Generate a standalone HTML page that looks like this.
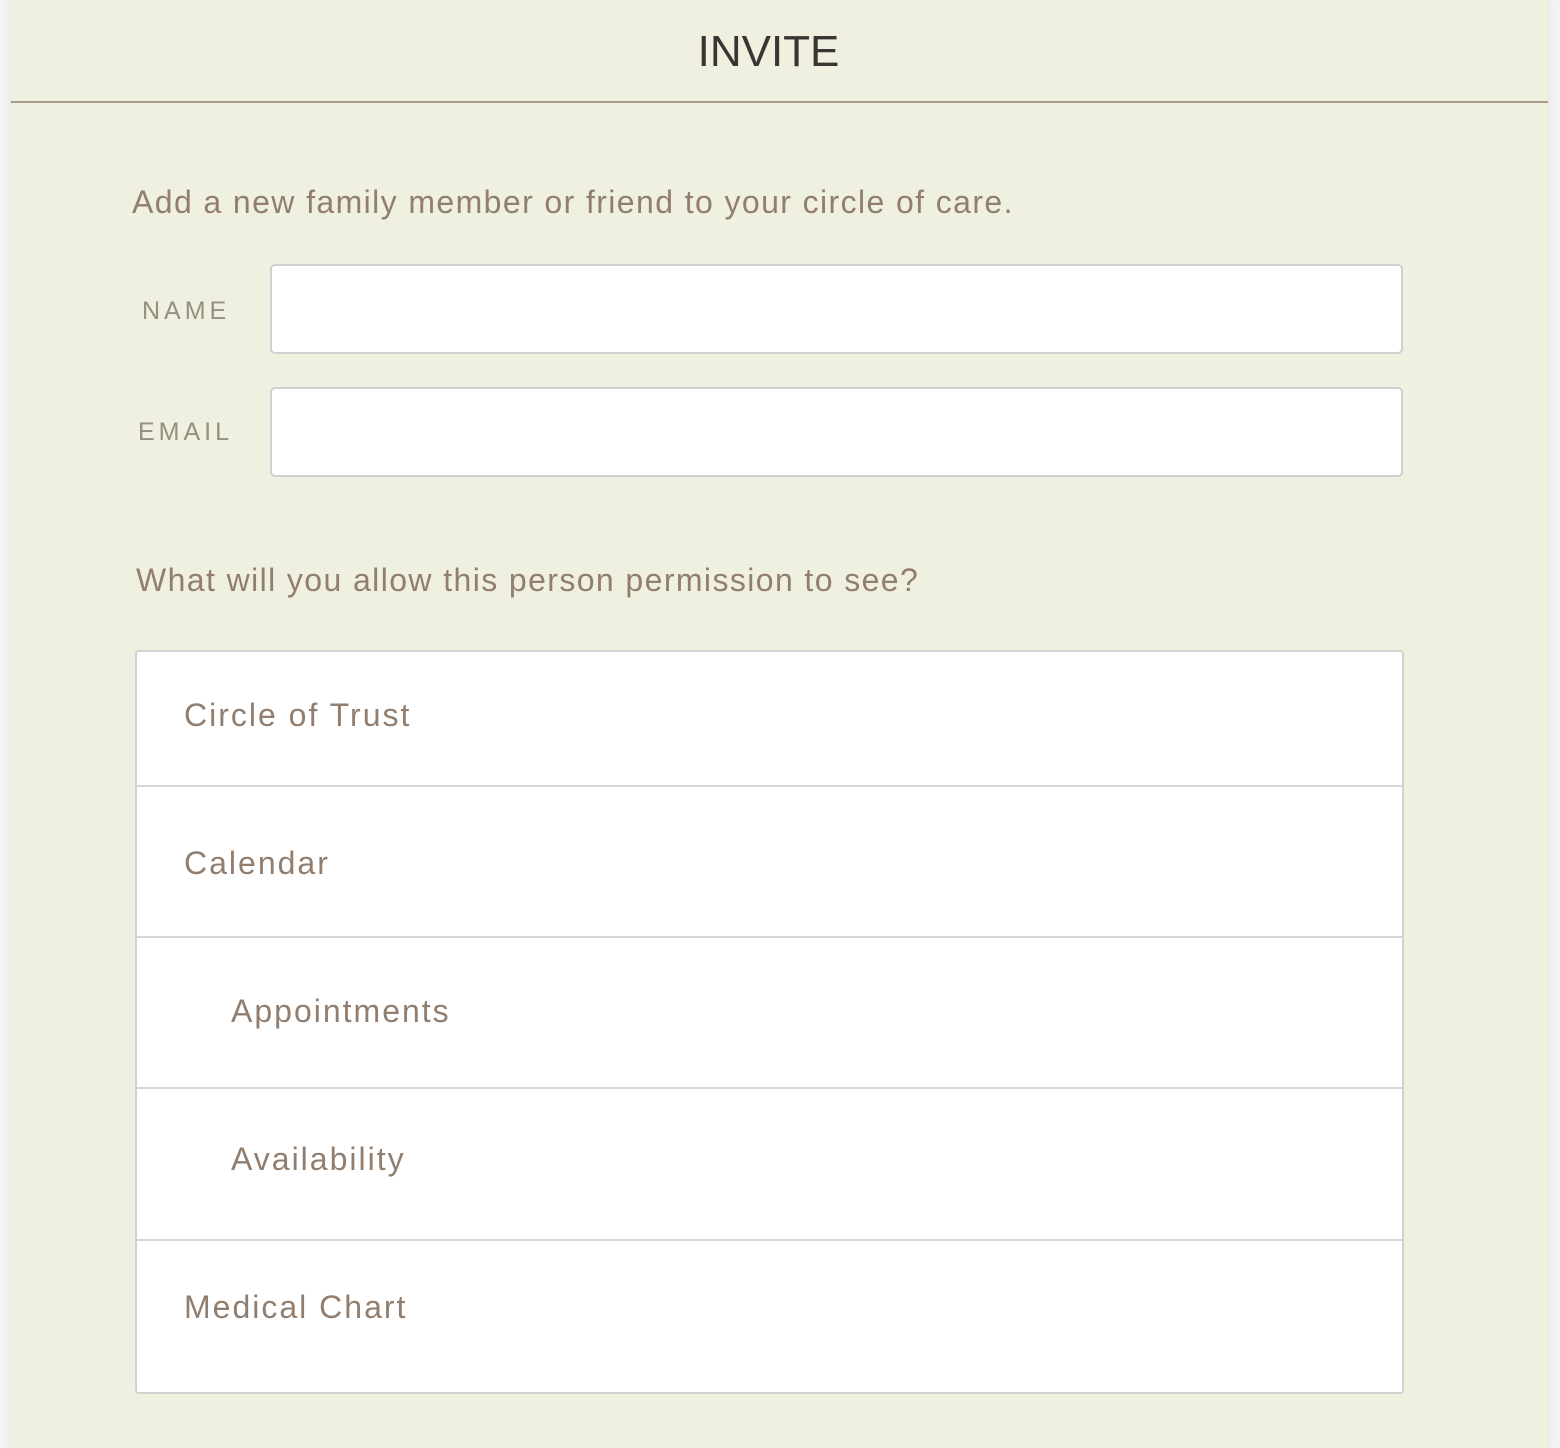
<!DOCTYPE html>
<html><head><style>
body{margin:0;width:1560px;height:1448px;background:#f3f3f3;font-family:"Liberation Sans",sans-serif;position:relative;overflow:hidden}
.panel{position:absolute;left:11px;top:0;width:1537px;height:1448px;background:#f0f0e0;box-shadow:0 0 8px rgba(0,0,0,.08)}
.hdr{position:absolute;left:0;top:0;width:100%;height:101px;border-bottom:2px solid #a89a8a}
.title{position:absolute;left:-11px;width:100%;top:26px;text-align:center;font-size:44px;letter-spacing:0;color:#3a3532;line-height:52px}
.t{position:absolute;color:#927e6e;font-size:32px;letter-spacing:1.4px;white-space:nowrap}
.lbl{position:absolute;color:#94907f;font-size:25px;letter-spacing:4px}
.inp{position:absolute;left:259px;width:1129px;height:86px;background:#fff;border:2px solid #d0d0d0;border-radius:5px}
.list{position:absolute;left:124px;top:650px;width:1265px;height:740px;background:#fff;border:2px solid #d2d2d2;border-radius:4px}
.row{position:absolute;left:0;width:100%;border-top:2px solid #d6d6d6}
.r{position:absolute;color:#927e6e;font-size:32px;letter-spacing:2px;white-space:nowrap}
</style></head><body>
<div class="panel">
<div class="hdr"><div class="title">INVITE</div></div>
<div class="t" style="left:121px;top:184px">Add a new family member or friend to your circle of care.</div>
<div class="lbl" style="left:131px;top:297px">NAME</div>
<div class="inp" style="top:264px"></div>
<div class="lbl" style="left:127px;top:418px">EMAIL</div>
<div class="inp" style="top:387px"></div>
<div class="t" style="left:125px;top:562px">What will you allow this person permission to see?</div>
<div class="list">
<div class="r" style="left:47px;top:45px">Circle of Trust</div>
<div class="row" style="top:133px"></div>
<div class="r" style="left:47px;top:193px">Calendar</div>
<div class="row" style="top:284px"></div>
<div class="r" style="left:94px;top:341px">Appointments</div>
<div class="row" style="top:435px"></div>
<div class="r" style="left:94px;top:489px">Availability</div>
<div class="row" style="top:587px"></div>
<div class="r" style="left:47px;top:637px">Medical Chart</div>
</div>
</div>
</body></html>
